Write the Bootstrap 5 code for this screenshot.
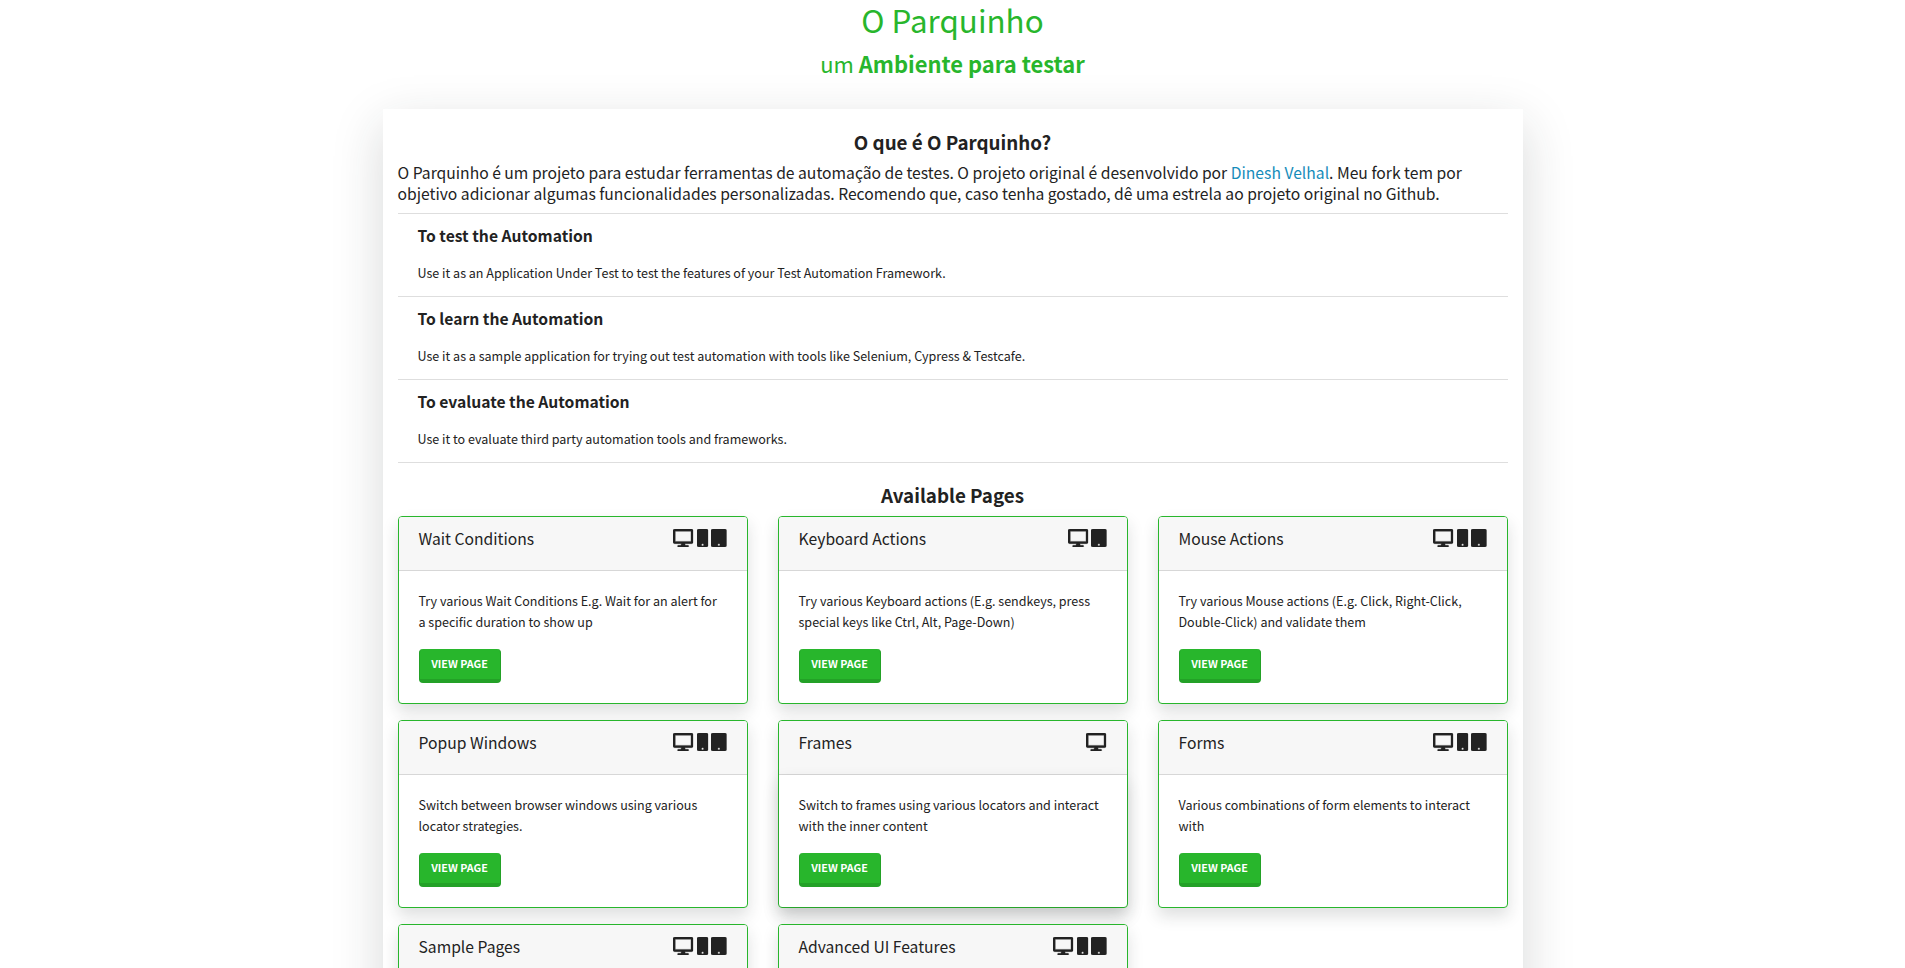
<!DOCTYPE html>
<html lang="pt-BR">
<head>
<meta charset="utf-8">
<meta name="viewport" content="width=device-width, initial-scale=1">
<title>O Parquinho</title>
<link href="https://cdn.jsdelivr.net/npm/bootstrap@5.3.0/dist/css/bootstrap.min.css" rel="stylesheet">
<style>
  :root { --green: #28b62c; --green-dark: #23a127; --ink: #222; }
  body { font-family: "Source Sans Pro", "Noto Sans CJK JP", sans-serif; font-size: 12.54px; line-height: 21px; color: var(--ink); height: 100vh; overflow: hidden; background: #fff; }
  h1, h2, h3, h4 { color: inherit; margin-bottom: 8px; }
  .site-title { font-size: 31.35px; line-height: 39px; font-weight: 400; color: var(--green); margin-bottom: 10px; }
  .site-sub { font-size: 21.94px; line-height: 29px; font-weight: 400; color: var(--green); margin-bottom: 31px; }
  .panel { width: 1140px; max-width: 1140px; padding: 20px 15px 60px; background: #fff; }
  .section-title { font-size: 18.8px; line-height: 25px; font-weight: 700; }
  .section-title.pages-title { line-height: 23px; margin-bottom: 10px; }
  .intro { font-size: 15.68px; line-height: 21px; font-weight: 400; margin-bottom: 9px; }
  .intro a { color: #158cba; text-decoration: none; }
  .purposes { border-top: 1px solid #dedede; margin-bottom: 20px; }
  .purposes .list-group-item { padding: 11px 20px; height: 83px; border: 0; border-bottom: 1px solid #dedede !important; color: inherit; background: transparent; }
  .purposes h3 { font-size: 15.67px; line-height: 21px; font-weight: 700; margin-bottom: 16px; }
  .pages { --bs-gutter-x: 30px; }
  .page-card { border: 1px solid var(--green); border-radius: 4px; margin-bottom: 16px; color: inherit; --bs-card-inner-border-radius: 3px; }
  .page-card .card-header { height: 54px; padding: 12px 20px; background: #f7f7f7; border-bottom: 1px solid #d7d7d7; }
  .page-card h3 { font-size: 15.67px; line-height: 19px; font-weight: 400; margin: 0; }
  .page-card .card-body { padding: 19px 20px 20px; color: inherit; }
  .page-card .card-text { margin-bottom: 17px; }
  .devices { gap: 3px; }
  .devices svg { height: 18px; fill: var(--ink); stroke: var(--ink); stroke-width: 10; display: block; overflow: visible; }
  .btn-view { --bs-btn-color: #fff; --bs-btn-bg: var(--green); --bs-btn-hover-color: #fff; --bs-btn-hover-bg: var(--green); width: 82px; height: 34px; padding: 6px 0; font-size: 10.75px; line-height: 18px; font-weight: 700; border: solid var(--green-dark); border-width: 0 1px 4px; border-radius: 4px; display: block; }
</style>
</head>
<body>
<svg class="d-none" xmlns="http://www.w3.org/2000/svg">
  <symbol id="desktop" viewBox="0 0 576 512"><path d="M528 0H48C21.500 0 0 21.500 0 48v320c0 26.500 21.500 48 48 48h192l-16 48h-72c-13.300 0-24 10.700-24 24s10.700 24 24 24h272c13.300 0 24-10.700 24-24s-10.700-24-24-24h-72l-16-48h192c26.500 0 48-21.500 48-48V48c0-26.500-21.500-48-48-48zm-16 352H64V64h448v288z"/></symbol>
  <symbol id="mobile" viewBox="0 0 320 512"><path d="M272 0H48C21.500 0 0 21.500 0 48v416c0 26.500 21.500 48 48 48h224c26.500 0 48-21.500 48-48V48c0-26.500-21.500-48-48-48zM160 480c-17.700 0-32-14.300-32-32s14.300-32 32-32 32 14.300 32 32-14.300 32-32 32z"/></symbol>
  <symbol id="tablet" viewBox="0 0 448 512"><path d="M400 0H48C21.500 0 0 21.500 0 48v416c0 26.500 21.500 48 48 48h352c26.500 0 48-21.500 48-48V48c0-26.500-21.500-48-48-48zM224 480c-17.700 0-32-14.300-32-32s14.300-32 32-32 32 14.300 32 32-14.300 32-32 32z"/></symbol>
</svg>
<header class="text-center">
  <h1 class="site-title">O Parquinho</h1>
  <h2 class="site-sub">um <strong>Ambiente para testar</strong></h2>
</header>
<main class="container panel shadow-lg">
  <h2 class="section-title text-center">O que é O Parquinho?</h2>
  <p class="intro">O Parquinho é um projeto para estudar ferramentas de automação de testes. O projeto original é desenvolvido por <a href="#">Dinesh Velhal</a>. Meu fork tem por<br>objetivo adicionar algumas funcionalidades personalizadas. Recomendo que, caso tenha gostado, dê uma estrela ao projeto original no Github.</p>
  <div class="list-group list-group-flush purposes">
    <div class="list-group-item"><h3>To test the Automation</h3><p class="mb-0">Use it as an Application Under Test to test the features of your Test Automation Framework.</p></div>
    <div class="list-group-item"><h3>To learn the Automation</h3><p class="mb-0">Use it as a sample application for trying out test automation with tools like Selenium, Cypress &amp; Testcafe.</p></div>
    <div class="list-group-item"><h3>To evaluate the Automation</h3><p class="mb-0">Use it to evaluate third party automation tools and frameworks.</p></div>
  </div>
  <h2 class="section-title pages-title text-center">Available Pages</h2>
  <div class="row pages" id="pages"></div>
</main>
<script src="https://cdn.jsdelivr.net/npm/bootstrap@5.3.0/dist/js/bootstrap.bundle.min.js"></script>
<script>
  const sizes = { desktop: 20.25, mobile: 11.25, tablet: 15.75 };
  const all = ['desktop', 'mobile', 'tablet'];
  const pages = [
    ['Wait Conditions', all, 'Try various Wait Conditions E.g. Wait for an alert for<br>a specific duration to show up'],
    ['Keyboard Actions', ['desktop', 'tablet'], 'Try various Keyboard actions (E.g. sendkeys, press<br>special keys like Ctrl, Alt, Page-Down)'],
    ['Mouse Actions', all, 'Try various Mouse actions (E.g. Click, Right-Click,<br>Double-Click) and validate them'],
    ['Popup Windows', all, 'Switch between browser windows using various<br>locator strategies.'],
    ['Frames', ['desktop'], 'Switch to frames using various locators and interact<br>with the inner content', 'shadow'],
    ['Forms', all, 'Various combinations of form elements to interact<br>with'],
    ['Sample Pages', all],
    ['Advanced UI Features', all]
  ];
  const body = (text, extra) => `
        <div class="card-body ${extra}">
          <p class="card-text">${text}</p>
          <a href="#" class="btn btn-view text-uppercase">View Page</a>
        </div>`;
  document.getElementById('pages').innerHTML = pages.map(([title, devices, text, extra = '']) => `
    <div class="col-4">
      <div class="card page-card shadow">
        <div class="card-header d-flex justify-content-between align-items-start">
          <h3>${title}</h3>
          <div class="d-flex devices">${devices.map(d => `<svg width="${sizes[d]}" aria-hidden="true"><use href="#${d}"/></svg>`).join('')}</div>
        </div>${text ? body(text, extra) : ''}
      </div>
    </div>`).join('');
</script>
</body>
</html>
